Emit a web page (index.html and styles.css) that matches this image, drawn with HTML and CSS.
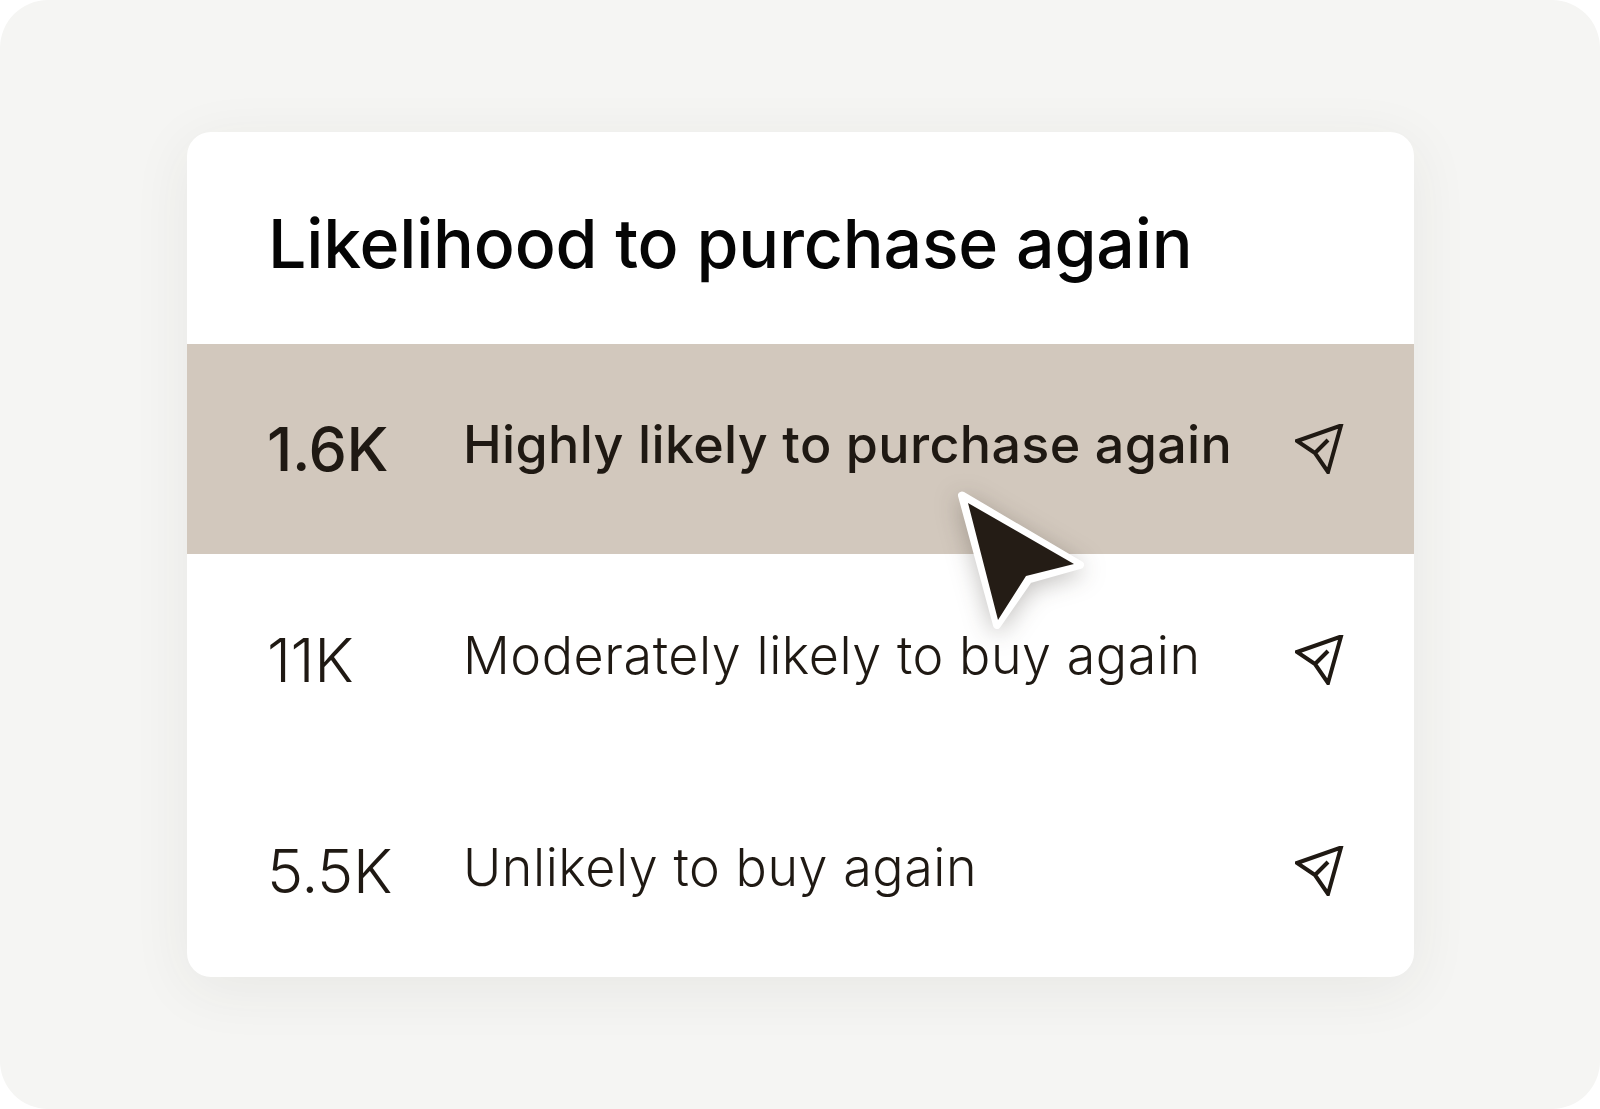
FILE: index.html
```html
<!DOCTYPE html>
<html lang="en">
<head>
<meta charset="utf-8">
<title>Likelihood to purchase again</title>
<link rel="stylesheet" href="styles.css">
</head>
<body>
<main class="stage">
  <section class="card">
    <h1 class="title">Likelihood to purchase again</h1>
    <ul class="rows">
      <li class="row row-active">
        <span class="count">1.6K</span>
        <span class="label">Highly likely to purchase again</span>
        <svg class="send" viewBox="0 0 50 50" aria-hidden="true"><path d="M46 1.500 2 17 20 29 33 48ZM20 29 33 16"/></svg>
      </li>
      <li class="row">
        <span class="count">11K</span>
        <span class="label">Moderately likely to buy again</span>
        <svg class="send" viewBox="0 0 50 50" aria-hidden="true"><path d="M46 1.500 2 17 20 29 33 48ZM20 29 33 16"/></svg>
      </li>
      <li class="row">
        <span class="count">5.5K</span>
        <span class="label">Unlikely to buy again</span>
        <svg class="send" viewBox="0 0 50 50" aria-hidden="true"><path d="M46 1.500 2 17 20 29 33 48ZM20 29 33 16"/></svg>
      </li>
    </ul>
    <svg class="cursor" viewBox="0 0 130 145" aria-hidden="true">
      <path class="cursor-halo" d="M4 5.500 122 75 70.500 89.500 39 135Z"/>
      <path class="cursor-fill" d="M10 13 116 74 68 86 40 130Z"/>
    </svg>
  </section>
</main>
</body>
</html>
```
FILE: styles.css
```css
html, body {
  margin: 0;
  height: 100%;
  background: #ffffff;
}
.stage {
  box-sizing: border-box;
  height: 1109px;
  background: #f5f5f3;
  border-radius: 48px;
  padding: 132px 186px 132px 187px;
  overflow: hidden;
  font-family: "Inter", "Liberation Sans", sans-serif;
}
.card {
  position: relative;
  height: 845px;
  background: #ffffff;
  border-radius: 24px;
  box-shadow: 0 12px 60px rgba(60, 50, 40, 0.07);
  display: flex;
  flex-direction: column;
}
.title {
  margin: 0;
  height: 212px;
  box-sizing: border-box;
  padding: 73px 0 0 81px;
  font-size: 68px;
  line-height: 76px;
  font-weight: 540;
  color: #050505;
  letter-spacing: -0.2px;
}
.rows {
  list-style: none;
  margin: 0;
  padding: 0;
  flex: 1;
  display: grid;
  grid-template-rows: 210px 211px 212px;
}
.row {
  display: flex;
  align-items: center;
  padding: 0 69px 0 80px;
  color: #1f1913;
  font-weight: 350;
}
.row-active {
  background: #d2c8bd;
  font-weight: 500;
}
.count {
  width: 196px;
  font-size: 61px;
  letter-spacing: -0.4px;
}
.label {
  flex: 1;
  font-size: 52px;
  letter-spacing: 0.55px;
  padding-bottom: 8px;
}
.row-active .label {
  letter-spacing: 0.35px;
  padding-bottom: 10px;
}
.send {
  width: 50px;
  height: 50px;
  fill: none;
  stroke: #1f1913;
  stroke-width: 4;
  stroke-linejoin: miter;
}
.cursor {
  position: absolute;
  left: 771px;
  top: 358px;
  width: 130px;
  height: 145px;
  filter: drop-shadow(0 5px 12px rgba(36, 28, 21, 0.28));
}
.cursor-halo {
  fill: #ffffff;
  stroke: #ffffff;
  stroke-width: 8;
  stroke-linejoin: round;
}
.cursor-fill {
  fill: #241c15;
}
```
